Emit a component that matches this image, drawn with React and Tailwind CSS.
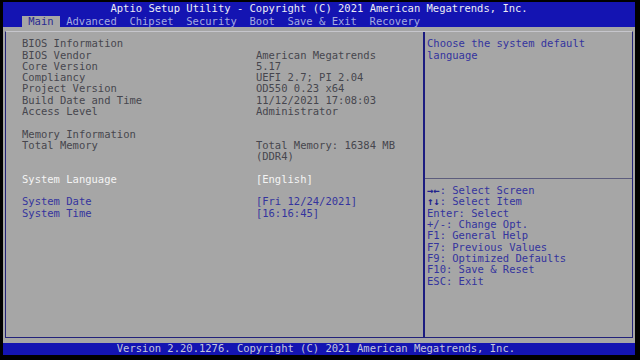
import React from "react";

const mono = { fontFamily: '"DejaVu Sans Mono", "Liberation Mono", monospace' };

const leftRows = [
  { l: "BIOS Information", v: "" },
  { l: "BIOS Vendor", v: "American Megatrends" },
  { l: "Core Version", v: "5.17" },
  { l: "Compliancy", v: "UEFI 2.7; PI 2.04" },
  { l: "Project Version", v: "OD550 0.23 x64" },
  { l: "Build Date and Time", v: "11/12/2021 17:08:03" },
  { l: "Access Level", v: "Administrator" },
  { l: "", v: "" },
  { l: "Memory Information", v: "" },
  { l: "Total Memory", v: "Total Memory: 16384 MB" },
  { l: "", v: "(DDR4)" },
  { l: "", v: "" },
  { l: "System Language", v: "[English]", c: "text-[#f4f4f4]" },
  { l: "", v: "" },
  { l: "System Date", v: "[Fri 12/24/2021]", c: "text-[#34349e]" },
  { l: "System Time", v: "[16:16:45]", c: "text-[#34349e]" },
];

const help = [
  { k: "\u2192\u2190", t: ": Select Screen", b: true },
  { k: "\u2191\u2193", t: ": Select Item", b: true },
  { k: "", t: "Enter: Select" },
  { k: "", t: "+/-: Change Opt." },
  { k: "", t: "F1: General Help" },
  { k: "", t: "F7: Previous Values" },
  { k: "", t: "F9: Optimized Defaults" },
  { k: "", t: "F10: Save & Reset" },
  { k: "", t: "ESC: Exit" },
];

const tabs = ["Main", "Advanced", "Chipset", "Security", "Boot", "Save & Exit", "Recovery"];

export default function App() {
  return (
    <div className="w-[640px] h-[360px] bg-black pt-[2px] px-[3px] overflow-hidden text-[10.5px] leading-[11.3px]" style={mono}>
      <div className="w-[632px] flex flex-col">
        {/* header */}
        <div className="bg-[#1414b2]">
          <div className="h-[13.7px] flex items-center pl-[17ch] text-[#ececf4] whitespace-pre">
            Aptio Setup Utility - Copyright (C) 2021 American Megatrends, Inc.
          </div>
          <div className="h-[11.3px] flex pl-[3ch] whitespace-pre">
            {tabs.map((t, i) => (
              <span
                key={t}
                className={
                  i === 0
                    ? "px-[1ch] bg-[#a6a6a6] text-[#2a2a92]"
                    : "px-[1ch] text-[#a4aae0]"
                }
              >
                {t}
              </span>
            ))}
          </div>
        </div>

        {/* body */}
        <div className="bg-[#a6a6a6] h-[316.4px] pt-[4px] pb-[5.4px] pl-[2px] pr-[2px]">
          <div className="h-full flex border-l border-r border-b border-[#22227a] border-t border-t-[#c6c6cc]">
            <div className="w-[419px] border-r-2 border-[#1c1c80] pt-[6.3px] pl-[16px] text-[#46464e]">
              {leftRows.map((r, i) => (
                <div key={i} className={"h-[11.3px] flex whitespace-pre " + (r.c || "")}>
                  <span className="w-[37ch] shrink-0">{r.l}</span>
                  <span>{r.v}</span>
                </div>
              ))}
            </div>
            <div className="flex-1 pt-[6.3px] text-[#34349e] whitespace-pre">
              <div className="h-[11.3px] pl-[2px]">Choose the system default</div>
              <div className="h-[11.3px] pl-[2px]">language</div>
              <div className="h-[113px]" />
              <div className="h-[11.3px] pt-[4px]">
                <div className="h-px bg-[#5c5c7c]" />
              </div>
              {help.map((h) => (
                <div key={h.t} className="h-[11.3px] pl-[2px] flex">
                  {h.k && <span className="w-[2ch] font-bold text-[#22228e]">{h.k}</span>}
                  <span>{h.t}</span>
                </div>
              ))}
            </div>
          </div>
        </div>

        {/* footer */}
        <div className="bg-[#1414b2] h-[11.3px] pl-[18ch] text-[#c4c6dc] whitespace-pre">
          Version 2.20.1276. Copyright (C) 2021 American Megatrends, Inc.
        </div>
      </div>
    </div>
  );
}
